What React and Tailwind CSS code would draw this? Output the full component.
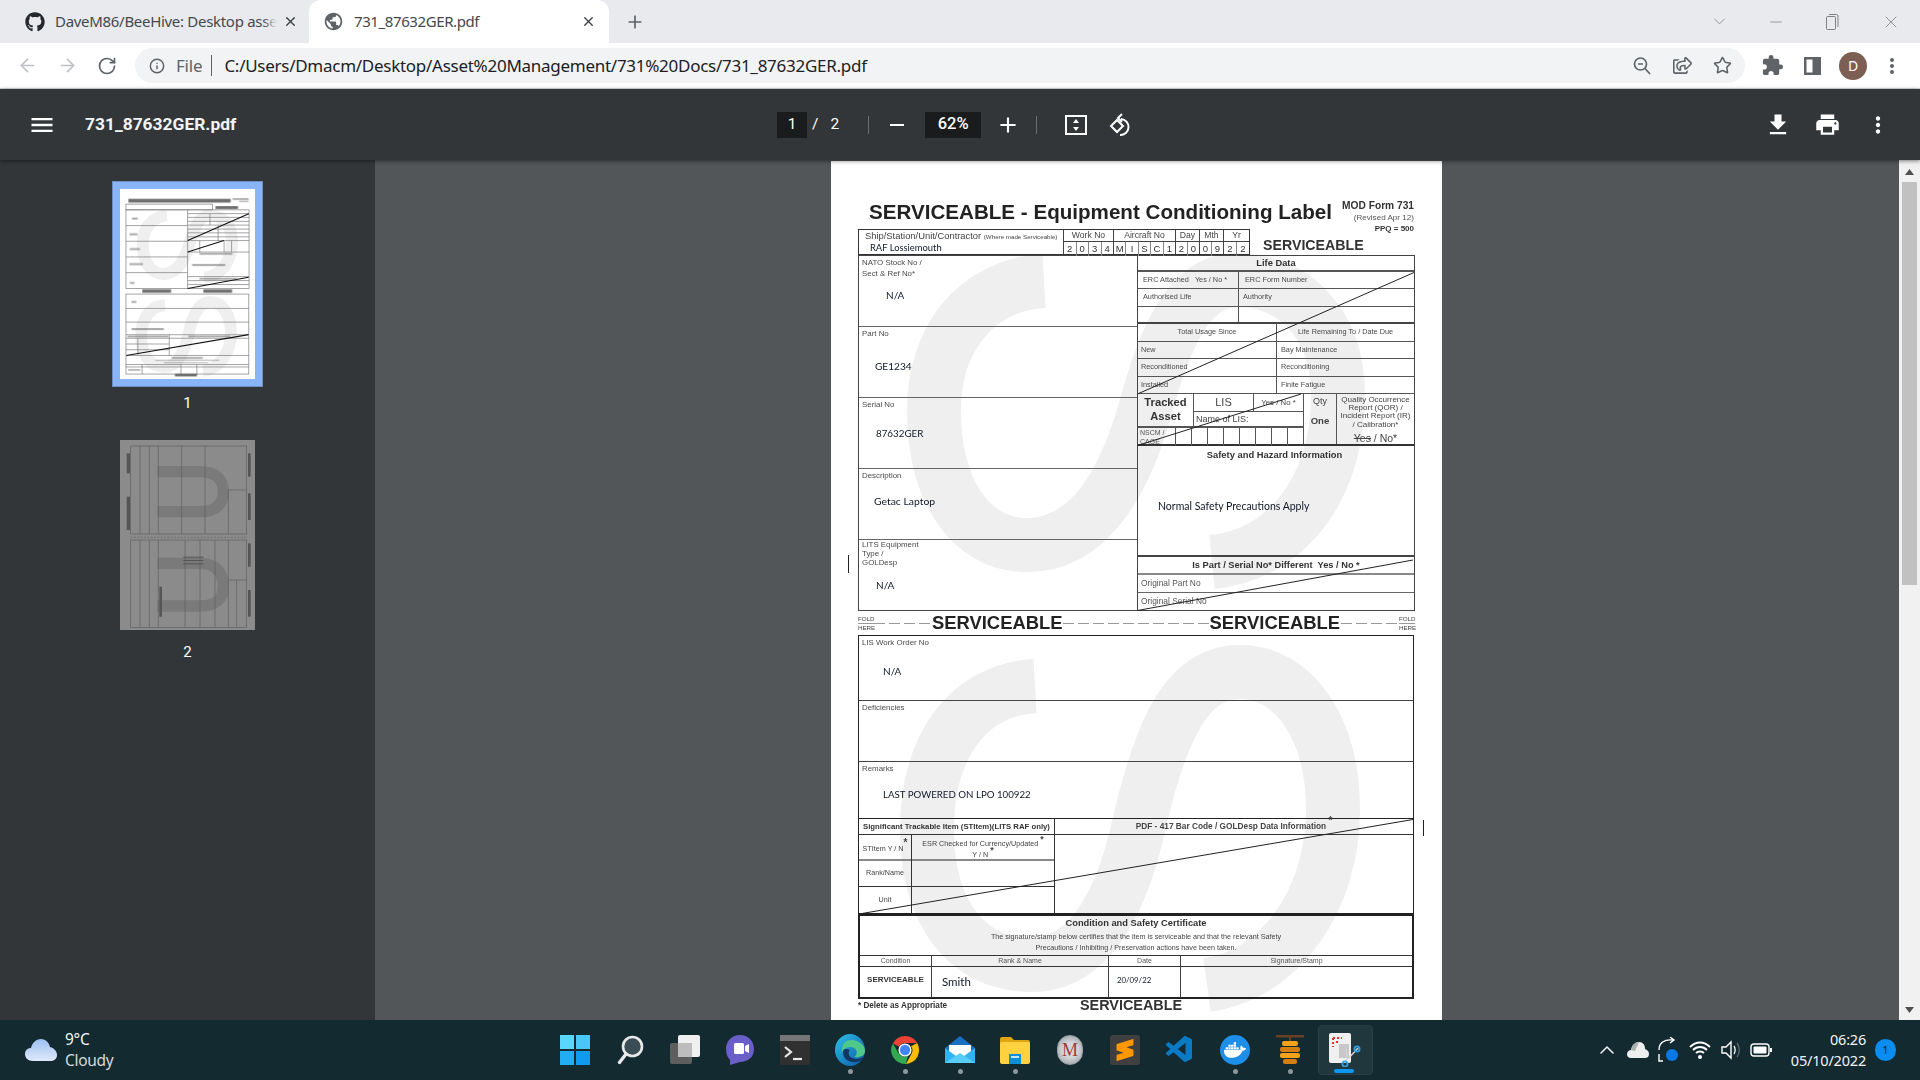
import React from "react";
import { ArrowLeft, ArrowRight, RotateCw, Info, Star, X, Plus, ChevronDown, Minus, ChevronUp } from "lucide-react";
import { FaGithub, FaRegShareSquare, FaDocker } from "react-icons/fa";
import { MdPublic, MdExtension, MdMoreVert, MdMenu, MdFileDownload, MdPrint, MdAdd, MdRemove } from "react-icons/md";
import { VscVscode } from "react-icons/vsc";
import { SiSublimetext } from "react-icons/si";

const ui = "font-['Noto_Sans',sans-serif]";
const arial = "font-['Liberation_Sans',Arial,sans-serif]";
const hand = "font-['Lato',sans-serif]";

// watermark strokes, in page coordinates
const Watermark = () => (
  <g fill="none" stroke="#efefef" strokeWidth="54">
    <path d="M1044 281 C975 285 934 340 934 410 C934 490 970 545 1027 545 C1090 545 1125 480 1145 410 C1165 335 1190 280 1237 280 C1295 280 1338 325 1338 395 C1338 490 1285 555 1212 562" />
    <path d="M1035 686 C965 690 927 750 927 830 C927 910 965 965 1031 965 C1095 965 1125 890 1140 820 C1160 735 1185 672 1240 672 C1295 672 1333 730 1333 810 C1333 900 1280 975 1207 985" />
  </g>
);

const Diagonals = ({ w = 1, c = "#222" }) => (
  <g stroke={c} strokeWidth={w}>
    <line x1="1137.5" y1="394" x2="1414" y2="272.5" />
    <line x1="1137.5" y1="445.5" x2="1301" y2="394" />
    <line x1="1137.5" y1="610.5" x2="1413" y2="560" />
    <line x1="859" y1="914" x2="1413" y2="819.5" />
  </g>
);

const Thumb1 = () => (
  <svg width="135" height="190" viewBox="831 161 611 859" className="block bg-white">
    <Watermark />
    <g fill="none" stroke="#777" strokeWidth="3">
      <rect x="858" y="229" width="392" height="26" />
      <rect x="858" y="255" width="557" height="356" />
      <rect x="858" y="636" width="556" height="362" />
      <path d="M1137 255V611M858 326H1137M858 397H1137M858 468H1137M858 539H1137M1137 272H1415M1137 289H1415M1137 307H1415M1137 324H1415M1137 342H1415M1137 359H1415M1137 377H1415M1137 394H1415M1137 446H1415M1137 557H1415M1137 575H1415M1137 593H1415M1275 324V394M1238 272V324M1192 394V446M1302 394V446M1336 394V446M858 701H1414M858 763H1414M858 820H1414M858 836H1414M1054 820V914M912 836V914M858 862H1054M858 888H1054M858 914H1414M858 955H1414M858 966H1414M931 955V998M1107 955V998M1179 955V998" />
    </g>
    <Diagonals w={5} c="#111" />
    <g fill="#555" opacity=".85">
      <rect x="869" y="205" width="463" height="17" />
      <rect x="1341" y="202" width="72" height="8" opacity=".6" />
      <rect x="1370" y="214" width="44" height="6" opacity=".5" />
      <rect x="1263" y="238" width="102" height="13" />
      <rect x="932" y="615" width="130" height="15" />
      <rect x="1208" y="615" width="130" height="15" />
      <rect x="1079" y="997" width="100" height="12" />
      <rect x="885" y="290" width="26" height="9" opacity=".6" />
      <rect x="874" y="361" width="36" height="9" opacity=".6" />
      <rect x="875" y="428" width="46" height="9" opacity=".6" />
      <rect x="874" y="496" width="60" height="9" opacity=".6" />
      <rect x="876" y="581" width="20" height="9" opacity=".6" />
      <rect x="883" y="667" width="22" height="9" opacity=".6" />
      <rect x="883" y="790" width="146" height="9" opacity=".6" />
      <rect x="1157" y="500" width="150" height="9" opacity=".6" />
      <rect x="1190" y="450" width="150" height="8" opacity=".6" />
      <rect x="1190" y="563" width="170" height="8" opacity=".6" />
      <rect x="1065" y="921" width="140" height="8" opacity=".6" />
      <rect x="990" y="933" width="290" height="6" opacity=".4" />
      <rect x="1030" y="944" width="200" height="6" opacity=".4" />
      <rect x="865" y="824" width="185" height="8" opacity=".6" />
      <rect x="1140" y="824" width="190" height="8" opacity=".6" />
      <rect x="868" y="976" width="55" height="7" opacity=".6" />
    </g>
  </svg>
);

const Thumb2 = () => (
  <svg width="135" height="190" viewBox="0 0 405 570" className="block bg-[#8b8b8b]">
    <g fill="none" stroke="#7a7a7a" strokeWidth="34">
      <path d="M112 95H240C290 95 310 120 310 155C310 190 290 215 240 215H112" />
      <path d="M112 370H240C290 370 310 400 310 440C310 475 290 498 240 498H112" />
    </g>
    <g fill="none" stroke="#5f5f5f" strokeWidth="2">
      <rect x="32" y="18" width="348" height="264" />
      <rect x="32" y="300" width="348" height="262" />
      <path d="M60 18V282M88 18V282M115 18V282M185 18V282M255 18V282M325 150V282M325 150H380M60 300V562M88 300V562M115 300V562M195 300V562M240 300V562M285 300V562M325 300V562M350 420V562M325 420H380" />
      <path d="M32 292H380" strokeDasharray="6 4" />
    </g>
    <g fill="#555">
      <rect x="20" y="40" width="10" height="60" />
      <rect x="20" y="170" width="10" height="100" />
      <rect x="384" y="40" width="8" height="70" />
      <rect x="384" y="160" width="8" height="80" />
      <rect x="384" y="310" width="8" height="70" />
      <rect x="384" y="450" width="8" height="80" />
      <rect x="118" y="440" width="8" height="90" />
      <rect x="190" y="350" width="60" height="3" />
      <rect x="190" y="360" width="60" height="3" />
      <rect x="190" y="370" width="60" height="3" />
    </g>
  </svg>
);

const Tabs = () => (
  <div className={`h-[43px] bg-[#e8eaed] flex items-stretch text-[15px] ${ui}`}>
    <div className="w-[309px] flex items-center pl-[25px] pr-[11px] text-[#45474a]">
      <FaGithub size={20} className="text-[#24292e] shrink-0" />
      <span className="ml-[10px] relative whitespace-nowrap tracking-[-0.3px]">
        DaveM86/BeeHive: Desktop asse
        <span className="absolute right-0 top-0 bottom-0 w-[14px] bg-gradient-to-r from-transparent to-[#e8eaed]" />
      </span>
      <X size={15} strokeWidth={2.2} className="ml-auto text-[#3c4043]" />
    </div>
    <div className="w-[300px] bg-white rounded-t-[12px] flex items-center pl-[14px] pr-[13px] text-[#45474a]">
      <MdPublic size={21} className="text-[#5f6368]" />
      <span className="ml-[10px] tracking-[-0.4px]">731_87632GER.pdf</span>
      <X size={15} strokeWidth={2.2} className="ml-auto text-[#3c4043]" />
    </div>
    <div className="ml-[16px] flex items-center">
      <Plus size={20} strokeWidth={2} className="text-[#5f6368]" />
    </div>
    <div className="ml-auto flex items-center text-[#7f8184]">
      <ChevronDown size={19} strokeWidth={1} />
      <div className="w-[38px]" />
      <Minus size={18} strokeWidth={1} />
      <div className="w-[40px]" />
      <svg width="14" height="18" viewBox="0 0 14 18" fill="none" stroke="currentColor" strokeWidth="1"><rect x="1.5" y="3.5" width="9" height="13" rx="1" /><path d="M4 1.5H11.5A1.5 1.5 0 0 1 13 3V14" /></svg>
      <div className="w-[42px]" />
      <X size={20} strokeWidth={1} />
      <div className="w-[19px]" />
    </div>
  </div>
);

const AddressBar = () => (
  <div className="h-[46px] bg-white border-b border-[#dadce0] flex items-center">
    <ArrowLeft size={21} strokeWidth={1.8} className="ml-[17px] text-[#bcbfc3]" />
    <ArrowRight size={21} strokeWidth={1.8} className="ml-[19px] text-[#bcbfc3]" />
    <RotateCw size={20} strokeWidth={2} className="ml-[19px] text-[#5f6368]" />
    <div className={`ml-[18px] w-[1610px] h-[35px] rounded-full bg-[#f1f3f4] flex items-center pr-[13px] ${ui}`}>
      <Info size={16} strokeWidth={2.2} className="ml-[14px] text-[#5f6368]" />
      <span className="ml-[11px] text-[17px] text-[#5f6368] tracking-[-0.2px]">File</span>
      <span className="ml-[9px] w-px h-[21px] bg-[#5f6368]" />
      <span className="ml-[12px] text-[17px] text-[#202124] tracking-[-0.27px] whitespace-nowrap">C:/Users/Dmacm/Desktop/Asset%20Management/731%20Docs/731_87632GER.pdf</span>
      <div className="ml-auto flex items-center gap-[21px] text-[#5f6368]">
        <svg width="20" height="20" viewBox="0 0 20 20" fill="none" stroke="currentColor" strokeWidth="1.7"><circle cx="8.5" cy="8" r="6" /><path d="M13 12.5L18 18M6 8H11" /></svg>
        <FaRegShareSquare size={19} />
        <Star size={19} strokeWidth={2} />
      </div>
    </div>
    <MdExtension size={23} className="ml-[16px] text-[#5f6368]" />
    <svg width="19" height="20" viewBox="0 0 19 20" className="ml-[19px]"><rect x="1" y="1" width="17" height="18" fill="#5f6368" /><rect x="3.5" y="3.5" width="6" height="13" fill="#fff" /></svg>
    <div className={`ml-[17px] w-[28px] h-[28px] rounded-full bg-[#7d5e52] text-white text-[14px] flex items-center justify-center ${ui}`}>D</div>
    <MdMoreVert size={24} className="ml-[13px] text-[#5f6368]" />
  </div>
);

const PdfBar = () => (
  <div className="h-[71px] bg-[#323639] grid grid-cols-[1fr_auto_1fr] items-center text-white relative z-10 shadow-[0_1px_4px_rgba(0,0,0,0.5)]">
    <div className="flex items-center pl-[28px]">
      <MdMenu size={28} />
      <span className="ml-[29px] text-[17.4px] font-bold font-['Roboto',sans-serif] text-[#f1f3f4]">731_87632GER.pdf</span>
    </div>
    <div className="flex items-center w-[366px] font-['Roboto',sans-serif] text-[15.5px]">
      <div className="w-[30px] h-[26px] bg-[#191b1c] flex items-center justify-center">1</div>
      <span className="ml-[5px]">/</span>
      <span className="ml-[12px]">2</span>
      <span className="ml-[29px] w-px h-[18px] bg-[#6b6f72]" />
      <MdRemove size={24} className="ml-[16px]" />
      <div className="ml-[16px] w-[56px] h-[26px] bg-[#191b1c] flex items-center justify-center text-[16.5px] font-medium">62%</div>
      <MdAdd size={26} className="ml-[14px]" />
      <span className="ml-[15px] w-px h-[18px] bg-[#6b6f72]" />
      <svg width="24" height="22" viewBox="0 0 24 22" fill="none" className="ml-[27px]"><rect x="2" y="2" width="20" height="18" stroke="#fff" strokeWidth="2" /><path d="M12 5L15 9H9ZM12 17L9 13H15Z" fill="#fff" /></svg>
      <svg width="24" height="26" viewBox="0 0 24 26" fill="none" stroke="#fff" strokeWidth="2" className="ml-[21px]"><path d="M8 8L2 14L8 20L14 14Z" /><path d="M12 7A8 8 0 1 1 11 23" /><path d="M13 2L9 6L13 10" /></svg>
    </div>
    <div className="flex items-center justify-end pr-[29px]">
      <MdFileDownload size={28} />
      <MdPrint size={27} className="ml-[22px]" />
      <MdMoreVert size={26} className="ml-[24px]" />
    </div>
  </div>
);

const Sidebar = () => (
  <div className="w-[375px] shrink-0 bg-[#323639] flex flex-col items-center text-white font-['Roboto',sans-serif] text-[15px]">
    <div className="mt-[21px] border border-[#6f8fc4] bg-[#8ab4f8] p-[7px]"><Thumb1 /></div>
    <div className="mt-[7px] h-[18px] leading-[18px]">1</div>
    <div className="mt-[28px]"><Thumb2 /></div>
    <div className="mt-[13px] h-[18px] leading-[18px]">2</div>
  </div>
);

// ---- form ----
const Lbl = ({ children, lh = "leading-[11px]" }) => <div className={`text-[7.9px] ${lh} text-[#4a4a4a]`}>{children}</div>;
const Val = ({ children, className = "" }) => <div className={`${hand} leading-[13px] text-[#101828] ${className}`}>{children}</div>;

const LeftRow = ({ label, value, pos, last }) => (
  <div className={`h-[71px] px-[3px] pt-[1px] ${last ? "" : "border-b border-[#666]"}`}>
    {label}
    <Val className={pos}>{value}</Val>
  </div>
);

const RightRow = ({ h, children }) => (
  <div className={`${h} flex border-b border-[#555] items-center text-[7.3px] text-[#4a4a4a]`}>{children}</div>
);

const DateCell = ({ w, title, chars }) => (
  <div className={`${w} h-full border-l border-[#444] flex flex-col`}>
    <div className="h-[11px] leading-[11px] text-center text-[8.6px] text-[#444]">{title}</div>
    <div className="flex-1 border-t border-[#444] flex">
      {chars.map((c, i) => (
        <div key={i} className={`flex-1 flex items-center justify-center text-[9.5px] text-[#333] ${i ? "border-l border-[#888]" : ""}`}>{c}</div>
      ))}
    </div>
  </div>
);

const Title = () => (
  <div className="h-[38px] flex items-start">
    <h1 className="ml-[11px] mt-[9px] text-[20.6px] leading-[24px] font-bold text-[#222] whitespace-nowrap">SERVICEABLE - Equipment Conditioning Label</h1>
    <div className="ml-auto text-right mt-[9px] pr-[1px]">
      <div className="text-[10.2px] leading-[12px] font-bold text-[#333]">MOD Form 731</div>
      <div className="text-[8.1px] leading-[11px] text-[#555]">(Revised Apr 12)</div>
      <div className="text-[8px] leading-[11px] font-bold text-[#333]">PPQ = 500</div>
    </div>
  </div>
);

const Header = () => (
  <div className="flex h-[26px]">
    <div className="w-[392px] flex border border-[#333]">
      <div className="w-[204px] flex flex-col pl-[6px]">
        <div className="h-[11px] leading-[11px] text-[9.4px] text-[#444] whitespace-nowrap">Ship/Station/Unit/Contractor <span className="text-[6.2px]">(Where made Serviceable)</span></div>
        <Val className="ml-[5px] text-[9.4px]">RAF Lossiemouth</Val>
      </div>
      <DateCell w="w-[50px]" title="Work No" chars={["2", "0", "3", "4"]} />
      <DateCell w="w-[62px]" title="Aircraft No" chars={["M", "I", "S", "C", "1"]} />
      <DateCell w="w-[24px]" title="Day" chars={["2", "0"]} />
      <DateCell w="w-[24px]" title="Mth" chars={["0", "9"]} />
      <DateCell w="w-[26px]" title="Yr" chars={["2", "2"]} />
    </div>
    <div className="ml-[13px] mt-[8px] text-[14.2px] leading-[16px] font-bold text-[#333]">SERVICEABLE</div>
  </div>
);

const TopBlock = () => (
  <div className="flex h-[356px] border border-[#444]">
    <div className="w-[279px] border-r border-[#444]">
      <LeftRow label={<Lbl>NATO Stock No /<br />Sect &amp; Ref No*</Lbl>} value="N/A" pos="ml-[24px] mt-[10px] text-[10px]" />
      <LeftRow label={<Lbl>Part No</Lbl>} value="GE1234" pos="ml-[13px] mt-[21px] text-[10.1px]" />
      <LeftRow label={<Lbl>Serial No</Lbl>} value="87632GER" pos="ml-[14px] mt-[17px] text-[9.8px]" />
      <LeftRow label={<Lbl>Description</Lbl>} value="Getac Laptop" pos="ml-[12px] mt-[14px] text-[10.4px]" />
      <LeftRow last label={<Lbl lh="leading-[8.8px]">LITS Equipment<br />Type /<br />GOLDesp</Lbl>} value="N/A" pos="ml-[14px] mt-[12px] text-[10px]" />
    </div>
    <div className="flex-1 flex flex-col">
      <div className="h-[16px] border-b-2 border-[#555] text-center text-[9.3px] leading-[14px] font-bold text-[#333]">Life Data</div>
      <RightRow h="h-[17px]">
        <div className="w-[100px] pl-[5px] pt-[1px] whitespace-nowrap">ERC Attached <span className="ml-[4px]">Yes / No *</span></div>
        <div className="h-full border-l border-[#555] pl-[6px] flex items-center">ERC Form Number</div>
      </RightRow>
      <RightRow h="h-[18px]">
        <div className="w-[100px] pl-[5px]">Authorised Life</div>
        <div className="h-full border-l border-[#555] pl-[4px] flex items-center">Authority</div>
      </RightRow>
      <div className="h-[17px] flex border-b-2 border-[#444]"><div className="w-[100px]" /><div className="h-full border-l border-[#555]" /></div>
      {[["Total Usage Since", "Life Remaining To / Date Due", true, "h-[18px]"], ["New", "Bay Maintenance", false, "h-[17px]"], ["Reconditioned", "Reconditioning", false, "h-[18px]"], ["Installed", "Finite Fatigue", false, "h-[17px]"]].map(([a, b, c, h]) => (
        <RightRow key={a} h={h}>
          <div className={`w-[138px] ${c ? "text-center" : "pl-[3px]"}`}>{a}</div>
          <div className={`flex-1 h-full border-l border-[#555] flex items-center ${c ? "justify-center" : "pl-[4px]"}`}>{b}</div>
        </RightRow>
      ))}
      <div className="h-[52px] flex border-b-2 border-[#333]">
        <div className="w-[165px] flex flex-col">
          <div className="h-[34px] flex border-b-2 border-[#555]">
            <div className="w-[55px] text-center text-[11.2px] leading-[13.5px] font-bold text-[#333] pt-[2px]">Tracked<br />Asset</div>
            <div className="flex-1 border-l border-[#555] flex flex-col">
              <div className="h-[18px] flex border-b border-[#555]">
                <div className="w-[59px] text-center text-[11px] leading-[17px] text-[#444]">LIS</div>
                <div className="flex-1 border-l border-[#555] text-center text-[7.8px] leading-[17px] text-[#444]">Yes / No *</div>
              </div>
              <div className="pl-[2px] text-[9px] leading-[15px] text-[#444]">Name of LIS:</div>
            </div>
          </div>
          <div className="flex-1 flex text-[7px] leading-[9px] text-[#555]">
            <div className="w-[37px] pl-[2px]">NSCM /<br />CAGE</div>
            {Array.from({ length: 8 }).map((_, i) => <div key={i} className="flex-1 border-l border-[#555]" />)}
          </div>
        </div>
        <div className="w-[34px] border-x border-[#555] text-center">
          <div className="text-[9px] leading-[14px] text-[#444]">Qty</div>
          <div className="text-[9.6px] font-bold leading-[26px] text-[#444]">One</div>
        </div>
        <div className="flex-1 text-center text-[8px] leading-[8.2px] text-[#444] pt-[2px]">
          Quality Occurrence<br />Report (QOR) /<br />Incident Report (IR)<br />/ Calibration*
          <div className="text-[10.5px] leading-[13px] mt-[3px]"><span className="line-through">Yes</span> / No*</div>
        </div>
      </div>
      <div className="h-[111px] border-b-2 border-[#444] pt-[2px]">
        <div className="text-center text-[9.4px] leading-[14px] font-bold text-[#333] pr-[3px]">Safety and Hazard Information</div>
        <Val className="ml-[20px] mt-[38px] text-[10.5px]">Normal Safety Precautions Apply</Val>
      </div>
      <div className="h-[18px] border-b-2 border-[#888] text-center text-[9.25px] leading-[17px] font-bold text-[#333]">Is Part / Serial No* Different&nbsp; Yes / No *</div>
      <div className="h-[18px] border-b border-[#666] pl-[3px] text-[8.4px] leading-[17px] text-[#555]">Original Part No</div>
      <div className="pl-[3px] text-[8.4px] leading-[17px] text-[#555]">Original Serial No</div>
    </div>
  </div>
);

const FoldMark = ({ right }) => (
  <div className={`w-[16px] text-[6.2px] leading-[8px] text-[#444] shrink-0 ${right ? "text-right" : ""}`}>
    <div className="border-b border-[#999]">FOLD</div>
    <div>HERE</div>
  </div>
);
const Dash = ({ className }) => <div className={`h-px bg-[repeating-linear-gradient(90deg,#999_0,#999_11px,transparent_11px,transparent_15px)] ${className}`} />;

const FoldRow = () => (
  <div className="h-[24px] flex items-center">
    <FoldMark />
    <Dash className="w-[57px]" />
    <div className="text-[18.4px] leading-[20px] font-bold text-[#222] mx-[1px]">SERVICEABLE</div>
    <Dash className="flex-1" />
    <div className="text-[18.4px] leading-[20px] font-bold text-[#222] mx-[1px]">SERVICEABLE</div>
    <Dash className="w-[58px]" />
    <FoldMark right />
  </div>
);

const BottomBlock = () => (
  <div className="w-[556px] border border-[#222]">
    <div className="h-[65px] px-[3px] border-b border-[#444] pt-[1px]">
      <Lbl>LIS Work Order No</Lbl>
      <Val className="ml-[21px] mt-[17px] text-[10px]">N/A</Val>
    </div>
    <div className="h-[61px] px-[3px] border-b border-[#444] pt-[1px]"><Lbl>Deficiencies</Lbl></div>
    <div className="h-[57px] px-[3px] border-b border-[#222] pt-[1px]">
      <Lbl>Remarks</Lbl>
      <Val className="ml-[21px] mt-[14px] text-[9.7px]">LAST POWERED ON LPO 100922</Val>
    </div>
    <div className="h-[94px] flex">
      <div className="w-[196px] border-r border-[#333] flex flex-col">
        <div className="h-[16px] border-b border-[#333] text-center text-[7.75px] leading-[15px] font-bold text-[#333] whitespace-nowrap">Significant Trackable Item (STItem)(LITS RAF only)</div>
        <div className="flex-1 flex text-[7.2px] text-[#444]">
          <div className="w-[53px] border-r border-[#333] flex flex-col text-center">
            <div className="h-[26px] border-b-2 border-[#888] leading-[27px]">STItem Y / N<sup className="text-[10px] leading-none font-bold">*</sup></div>
            <div className="h-[26px] border-b border-[#333] leading-[24px]">Rank/Name</div>
            <div className="flex-1 leading-[26px]">Unit</div>
          </div>
          <div className="flex-1 flex flex-col text-center">
            <div className="h-[26px] border-b-2 border-[#888] leading-[11px] pt-[3px]">ESR Checked for Currency/Updated <sup className="text-[9px] leading-none font-bold">*</sup><br />Y / N <sup className="text-[9px] leading-none font-bold">*</sup></div>
            <div className="h-[26px] border-b border-[#333]" />
            <div className="flex-1" />
          </div>
        </div>
      </div>
      <div className="flex-1">
        <div className="h-[16px] border-b border-[#333] text-center text-[8.3px] leading-[15px] font-bold text-[#444] whitespace-nowrap">PDF - 417 Bar Code / GOLDesp Data Information <sup className="text-[10px] leading-none">*</sup></div>
      </div>
    </div>
  </div>
);

const CertBlock = () => (
  <div className="w-[556px] h-[85px] border-2 border-[#222] flex flex-col">
    <div className="h-[40px] text-center border-b border-[#333]">
      <div className="text-[9.3px] leading-[15px] font-bold text-[#333]">Condition and Safety Certificate</div>
      <div className="text-[7.2px] leading-[11px] text-[#444]">The signature/stamp below certifies that the item is serviceable and that the relevant Safety</div>
      <div className="text-[7.2px] leading-[11px] text-[#444]">Precautions / Inhibiting / Preservation actions have been taken.</div>
    </div>
    <div className="h-[11px] flex border-b border-[#333] text-[7px] leading-[10px] text-[#555] text-center">
      <div className="w-[71px]">Condition</div>
      <div className="w-[177px] border-l border-[#444]">Rank &amp; Name</div>
      <div className="w-[72px] border-l border-[#444]">Date</div>
      <div className="flex-1 border-l border-[#444]">Signature/Stamp</div>
    </div>
    <div className="flex-1 flex">
      <div className="w-[71px] text-center text-[8px] font-bold leading-[26px] text-[#333]">SERVICEABLE</div>
      <div className="w-[177px] border-l border-[#444]"><Val className="ml-[10px] mt-[8px] text-[11.5px]">Smith</Val></div>
      <div className="w-[72px] border-l border-[#444]"><Val className="ml-[8px] mt-[7px] text-[7.8px]">20/09/22</Val></div>
      <div className="flex-1 border-l border-[#444]" />
    </div>
  </div>
);

const Paper = () => (
  <div className={`relative mt-px w-[611px] h-[859px] bg-white overflow-hidden shrink-0 ${arial}`}>
    <svg className="absolute left-0 top-0" width="611" height="859" viewBox="831 161 611 859"><Watermark /></svg>
    <div className="relative pl-[27px] pr-[27px] pt-[30px] blur-[0.25px]">
      <Title />
      <Header />
      <TopBlock />
      <FoldRow />
      <BottomBlock />
      <CertBlock />
      <div className="flex">
        <div className="w-[222px] text-[8.15px] leading-[14px] font-bold text-[#333]">* Delete as Appropriate</div>
        <div className="text-[14.4px] leading-[14px] mt-[-1px] font-bold text-[#333]">SERVICEABLE</div>
      </div>
    </div>
    <svg className="absolute left-0 top-0" width="611" height="859" viewBox="831 161 611 859"><Diagonals /></svg>
  </div>
);

const Scrollbar = () => (
  <div className="w-[21px] shrink-0 bg-[#f1f1f1] flex flex-col items-center justify-between relative">
    <svg width="9" height="6" viewBox="0 0 9 6" className="mt-[9px]"><path d="M4.5 0L9 6H0Z" fill="#505050" /></svg>
    <div className="absolute top-[22px] left-[3px] w-[15px] h-[403px] bg-[#c1c1c1]" />
    <svg width="9" height="6" viewBox="0 0 9 6" className="mb-[7px]"><path d="M4.5 6L9 0H0Z" fill="#505050" /></svg>
  </div>
);

// ---- taskbar icons ----
const Win = () => (
  <div className="w-[30px] h-[30px] grid grid-cols-2 grid-rows-2 gap-[1.5px]">
    <div className="bg-[#5ad6fb]" /><div className="bg-[#49c8f8]" />
    <div className="bg-[#22aef5]" /><div className="bg-[#0f9cf0]" />
  </div>
);
const SearchIcon = () => (
  <svg width="30" height="30" viewBox="0 0 30 30"><circle cx="17.5" cy="11.5" r="9.5" fill="#3a4c54" stroke="#e8eaea" strokeWidth="2.6" /><path d="M11 19L4.5 27.5" stroke="#e8eaea" strokeWidth="3.4" strokeLinecap="round" /></svg>
);
const TaskView = () => (
  <svg width="30" height="30" viewBox="0 0 30 30"><rect x="0" y="8" width="22" height="21" rx="2" fill="#5e5e5e" /><rect x="8" y="0" width="22" height="22" rx="2" fill="#f0f0f0" /><rect x="8" y="8" width="14" height="14" fill="#bdbdbd" /></svg>
);
const Teams = () => (
  <svg width="30" height="32" viewBox="0 0 30 32"><path d="M15 1C23 1 29 7 29 15C29 23 23 28 15 28L5 31L5 26C2 23 1 19 1 15C1 7 7 1 15 1Z" fill="#6a5fc8" /><rect x="9" y="9" width="10" height="11" rx="1.5" fill="#fff" /><path d="M20 12L24 10V19L20 17Z" fill="#fff" /></svg>
);
const Terminal = () => (
  <svg width="30" height="30" viewBox="0 0 30 30"><rect width="30" height="30" rx="2" fill="#303030" /><rect width="30" height="6" fill="#757575" /><path d="M5 12L11 17L5 22" stroke="#e8e8e8" strokeWidth="2.2" fill="none" /><path d="M13 24H22" stroke="#e8e8e8" strokeWidth="2.2" /></svg>
);
const Edge = () => (
  <svg width="30" height="32" viewBox="0 0 30 32">
    <defs><linearGradient id="eg" x1="0" y1="0" x2="1" y2="1"><stop offset="0" stopColor="#2fc1e6" /><stop offset="1" stopColor="#0b58a8" /></linearGradient></defs>
    <ellipse cx="15" cy="16" rx="15" ry="16" fill="url(#eg)" />
    <path d="M16 6C24 6 30 11 30 17C30 22 24 24 19 23C24 20 22 13 15 13C10 13 8 16 7 19C6 12 9 6 16 6Z" fill="#4fc98a" />
    <path d="M8 18C8 25 14 29 22 28C26 27 28 25 30 22C26 25 21 26 17 24C13 22 13 18 15 16C11 14 8 15 8 18Z" fill="#12365f" />
  </svg>
);
const Chrome = () => (
  <svg width="30" height="32" viewBox="0 0 32 32">
    <path d="M16 1A15 15 0 0 1 29 8.5H16A7.5 7.5 0 0 0 9.5 12.2L3 9A15 15 0 0 1 16 1Z" fill="#ea4335" />
    <path d="M29 8.5A15 15 0 0 1 17 31L23 20A7.5 7.5 0 0 0 22.5 12Z" fill="#fbbc04" />
    <path d="M3 9L9.5 20A7.5 7.5 0 0 0 19 22.5L17 31A15 15 0 0 1 3 9Z" fill="#34a853" />
    <circle cx="16" cy="16" r="7" fill="#fff" /><circle cx="16" cy="16" r="5.5" fill="#4285f4" />
  </svg>
);
const Mail = () => (
  <svg width="30" height="30" viewBox="0 0 30 30"><path d="M15 1L30 13V28H0V13Z" fill="#1a6fc0" /><path d="M4 10H26V20L15 24L4 20Z" fill="#fff" /><path d="M0 13L15 24L30 13V28H0Z" fill="#31b4f2" /><path d="M0 28L15 18L30 28Z" fill="#58cdf7" /></svg>
);
const Folder = () => (
  <svg width="30" height="28" viewBox="0 0 30 28"><path d="M0 3A2 2 0 0 1 2 1H11L14 4H28A2 2 0 0 1 30 6V12H0Z" fill="#e2a512" /><rect y="6" width="30" height="22" rx="2" fill="#fdd13f" /><rect x="9" y="18" width="12" height="10" fill="#0a8fd8" /><rect x="11" y="20" width="8" height="2" fill="#bfe6fb" /></svg>
);
const Mcafee = () => (
  <div className="w-[26px] h-[30px] rounded-full bg-[radial-gradient(circle,#d4d7da_40%,#8e969c)] border border-[#9aa2a8] flex items-center justify-center font-['Liberation_Serif',serif] text-[18px] text-[#a33a3a] leading-none">M</div>
);
const Sublime = () => (
  <div className="w-[30px] h-[30px] rounded-[3px] bg-[#3f3f3f] flex items-center justify-center"><SiSublimetext size={22} className="text-[#ff9800]" /></div>
);
const Docker = () => (
  <div className="w-[30px] h-[30px] rounded-full bg-[#1d8fe8] flex items-center justify-center"><FaDocker size={22} className="text-white" /></div>
);
const Hive = () => (
  <svg width="30" height="32" viewBox="0 0 30 32">
    <rect x="1" y="1" width="28" height="2.5" fill="#6b3f22" /><rect x="14" y="3" width="2" height="4" fill="#6b3f22" />
    <rect x="7" y="7" width="16" height="5" rx="2" fill="#f4a11c" /><rect x="5" y="13" width="20" height="5" rx="2" fill="#d47f10" />
    <rect x="5" y="19" width="20" height="5" rx="2" fill="#f4a11c" /><rect x="8" y="25" width="14" height="5" rx="2" fill="#d47f10" />
  </svg>
);
const Snip = () => (
  <svg width="32" height="34" viewBox="0 0 32 34">
    <rect x="0" y="0" width="22" height="30" rx="2" fill="#f0f0f0" />
    <path d="M4 5H13M4 5V14M7 9H9" stroke="#e0382e" strokeWidth="2" strokeDasharray="2 2" fill="none" />
    <rect x="10" y="11" width="10" height="14" fill="#c8c8c8" />
    <path d="M17 16L18 27M29 15L18 27" stroke="#d6d6d6" strokeWidth="1.5" />
    <circle cx="28" cy="16" r="2.6" fill="none" stroke="#2aa0e6" strokeWidth="1.8" />
    <circle cx="16" cy="31" r="2.6" fill="none" stroke="#2aa0e6" strokeWidth="1.8" />
  </svg>
);

const apps = [
  { icon: <Win /> },
  { icon: <SearchIcon /> },
  { icon: <TaskView /> },
  { icon: <Teams /> },
  { icon: <Terminal /> },
  { icon: <Edge />, dot: true },
  { icon: <Chrome />, dot: true },
  { icon: <Mail />, dot: true },
  { icon: <Folder />, dot: true },
  { icon: <Mcafee /> },
  { icon: <Sublime /> },
  { icon: <VscVscode size={32} className="text-[#0b7ac5]" /> },
  { icon: <Docker />, dot: true },
  { icon: <Hive />, dot: true },
  { icon: <Snip />, active: true },
];

const Taskbar = () => (
  <div className={`h-[60px] bg-[#132a31] grid grid-cols-[1fr_auto_1fr] items-center text-[#f2f4f4] ${ui}`}>
    <div className="flex items-center pl-[25px]">
      <svg width="32" height="24" viewBox="0 0 32 24">
        <defs><linearGradient id="cl" x1="0" y1="0" x2="0" y2="1"><stop offset="0" stopColor="#9cc0f2" /><stop offset="1" stopColor="#dfe9fa" /></linearGradient></defs>
        <path d="M8 23C3 23 0 20 0 16C0 12 3 10 6 10C7 5 11 1 16 1C21 1 24 5 25 9C29 10 32 13 32 17C32 21 29 23 25 23Z" fill="url(#cl)" />
      </svg>
      <div className="ml-[8px] text-[15.5px] leading-[21px] tracking-[-0.3px]">
        <div>9°C</div>
        <div className="text-[#d5dadb]">Cloudy</div>
      </div>
    </div>
    <div className="flex">
      {apps.map((a, i) => (
        <div key={i} className={`w-[55px] h-[50px] flex items-center justify-center relative rounded-[4px] ${a.active ? "bg-[#21373e] border border-[#2a4048]" : ""}`}>
          {a.icon}
          {a.dot && <div className="absolute bottom-[1px] left-[25px] w-[5px] h-[5px] rounded-full bg-[#8c989c]" />}
          {a.active && <div className="absolute bottom-[1px] left-[15px] w-[20px] h-[4px] rounded-full bg-[#0a97f5]" />}
        </div>
      ))}
    </div>
    <div className="flex items-center justify-end pr-[24px]">
      <ChevronUp size={24} strokeWidth={1.5} />
      <svg width="22" height="18" viewBox="0 0 22 18" className="ml-[8px]"><path d="M4 17C1 17 0 15 0 13C0 11 2 9 4 9C5 4 8 1 12 1C16 1 18 4 18 8C20 9 22 10 22 13C22 16 20 17 18 17Z" fill="#eef0f0" /><path d="M4 9C5 4 8 1 12 1L8 10Z" fill="#a8b0b2" /></svg>
      <svg width="22" height="27" viewBox="0 0 22 27" fill="none" stroke="#fff" strokeWidth="1.4" className="ml-[8px]"><path d="M2 13C2 6 7 2 16 3M13 0L17 3L13 6M2 17V24H6" /><circle cx="15" cy="18" r="6" fill="#0a78e6" stroke="none" /></svg>
      <svg width="22" height="22" viewBox="0 0 22 22" fill="none" stroke="#fff" strokeWidth="1.8" className="ml-[10px]"><path d="M1 8C7 2 15 2 21 8M4 11C8 7 14 7 18 11M7 14C9 12 13 12 15 14" /><circle cx="11" cy="18" r="2" fill="#fff" stroke="none" /></svg>
      <svg width="20" height="22" viewBox="0 0 20 22" fill="none" className="ml-[10px]"><path d="M1 8H5L10 3V19L5 14H1Z" stroke="#fff" strokeWidth="1.4" /><path d="M13 7C14.5 9 14.5 13 13 15" stroke="#fff" strokeWidth="1.3" /><path d="M16 4C19 8 19 14 16 18" stroke="#667" strokeWidth="1.3" /></svg>
      <svg width="22" height="14" viewBox="0 0 22 14" fill="none" className="ml-[9px]"><rect x="1" y="1" width="18" height="12" rx="3" stroke="#fff" strokeWidth="1.4" /><rect x="3.5" y="3.5" width="13" height="7" rx="1" fill="#fff" /><rect x="20" y="5" width="2" height="4" fill="#fff" /></svg>
      <div className="ml-[19px] text-right text-[14.5px] leading-[21px] tracking-[-0.2px]">
        <div>06:26</div>
        <div>05/10/2022</div>
      </div>
      <div className="ml-[9px] w-[21px] h-[22px] rounded-full bg-[#0a8cf0] text-[#0b1f2a] text-[11px] flex items-center justify-center">1</div>
    </div>
  </div>
);

export default function App() {
  return (
    <div className="w-[1920px] h-[1080px] flex flex-col overflow-hidden">
      <Tabs />
      <AddressBar />
      <PdfBar />
      <div className="flex-1 min-h-0 flex">
        <Sidebar />
        <div className="flex-1 bg-[#525659] flex justify-center overflow-hidden relative pr-px">
          <Paper />
          <div className="absolute left-[473px] top-[395px] w-px h-[18px] bg-[#222]" />
          <div className="absolute left-[1048px] top-[660px] w-px h-[16px] bg-[#222]" />
        </div>
        <Scrollbar />
      </div>
      <Taskbar />
    </div>
  );
}
